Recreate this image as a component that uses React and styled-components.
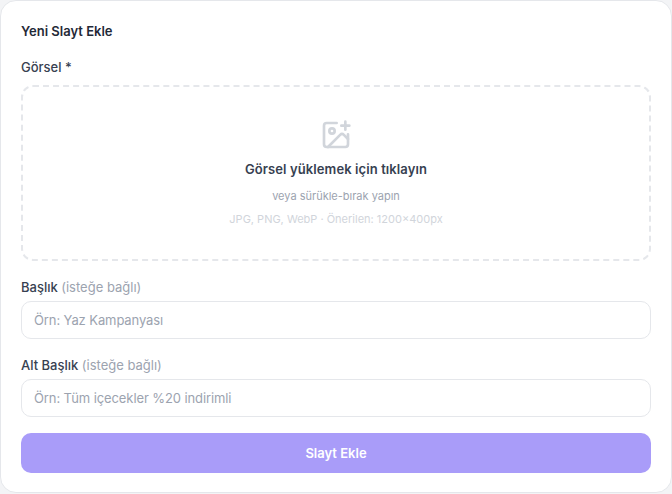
import React from "react";
import styled, { createGlobalStyle } from "styled-components";
import { ImagePlus } from "lucide-react";

const GlobalStyle = createGlobalStyle`
    html, body {
        margin: 0;
        background: #f3f4f6;
    }
    * {
        box-sizing: border-box;
    }
`;

const App = () => {
    return (
        <>
            <GlobalStyle />
            <Card>
                <Title>Yeni Slayt Ekle</Title>
                <Field>
                    <Label $gap={8}>Görsel *</Label>
                    <DropZone>
                        <DropIcon size={32} strokeWidth={2} />
                        <DropTitle>Görsel yüklemek için tıklayın</DropTitle>
                        <DropHint>veya sürükle-bırak yapın</DropHint>
                        <DropFormats>JPG, PNG, WebP · Önerilen: 1200×400px</DropFormats>
                    </DropZone>
                </Field>
                <TextField label="Başlık" placeholder="Örn: Yaz Kampanyası" />
                <TextField label="Alt Başlık" placeholder="Örn: Tüm içecekler %20 indirimli" />
                <SubmitButton type="button">Slayt Ekle</SubmitButton>
            </Card>
        </>
    );
};

const TextField = ({ label, placeholder }) => (
    <Field>
        <Label $gap={4}>
            {label} <Optional>(isteğe bağlı)</Optional>
        </Label>
        <Input placeholder={placeholder} />
    </Field>
);

export default App;

const Card = styled.div`
    display: flex;
    flex-direction: column;
    width: 672px;
    height: 493px;
    padding: 20px;
    background: #ffffff;
    border: 1px solid #e5e7eb;
    border-radius: 16px;
    font-family: Inter, "Noto Sans", sans-serif;
`;

const Title = styled.h3`
    margin: 0 0 16px;
    font-size: 13px;
    line-height: 20px;
    font-weight: 600;
    color: #1f2937;
`;

const Field = styled.div`
    display: flex;
    flex-direction: column;
    margin-bottom: 16px;
`;

const Label = styled.label`
    margin-bottom: ${props => props.$gap}px;
    font-size: 13px;
    line-height: 20px;
    font-weight: 500;
    color: #374151;
`;

const Optional = styled.span`
    font-weight: 400;
    color: #9ca3af;
`;

const DropZone = styled.div`
    display: flex;
    flex-direction: column;
    align-items: center;
    justify-content: center;
    height: 176px;
    border: 2px dashed #e5e7eb;
    border-radius: 12px;
`;

const DropIcon = styled(ImagePlus)`
    margin-bottom: 8px;
    color: #d1d5db;
`;

const DropTitle = styled.div`
    margin-bottom: 8px;
    font-size: 13px;
    line-height: 20px;
    font-weight: 600;
    letter-spacing: 0.1px;
    color: #374151;
`;

const DropHint = styled.div`
    margin-bottom: 5px;
    font-size: 11px;
    line-height: 18px;
    color: #9ca3af;
`;

const DropFormats = styled.div`
    font-size: 11px;
    line-height: 18px;
    color: #d1d5db;
`;

const Input = styled.input`
    height: 38px;
    padding: 0 12px;
    background: #ffffff;
    border: 1px solid #e5e7eb;
    border-radius: 10px;
    outline: none;
    font-family: inherit;
    font-size: 13px;
    letter-spacing: -0.1px;
    color: #374151;

    &::placeholder {
        color: #9ca3af;
        opacity: 1;
    }
`;

const SubmitButton = styled.button`
    flex-shrink: 0;
    height: 40px;
    background: #a99cf9;
    border: none;
    border-radius: 10px;
    font-family: inherit;
    font-size: 13px;
    font-weight: 600;
    color: #ffffff;
`;
